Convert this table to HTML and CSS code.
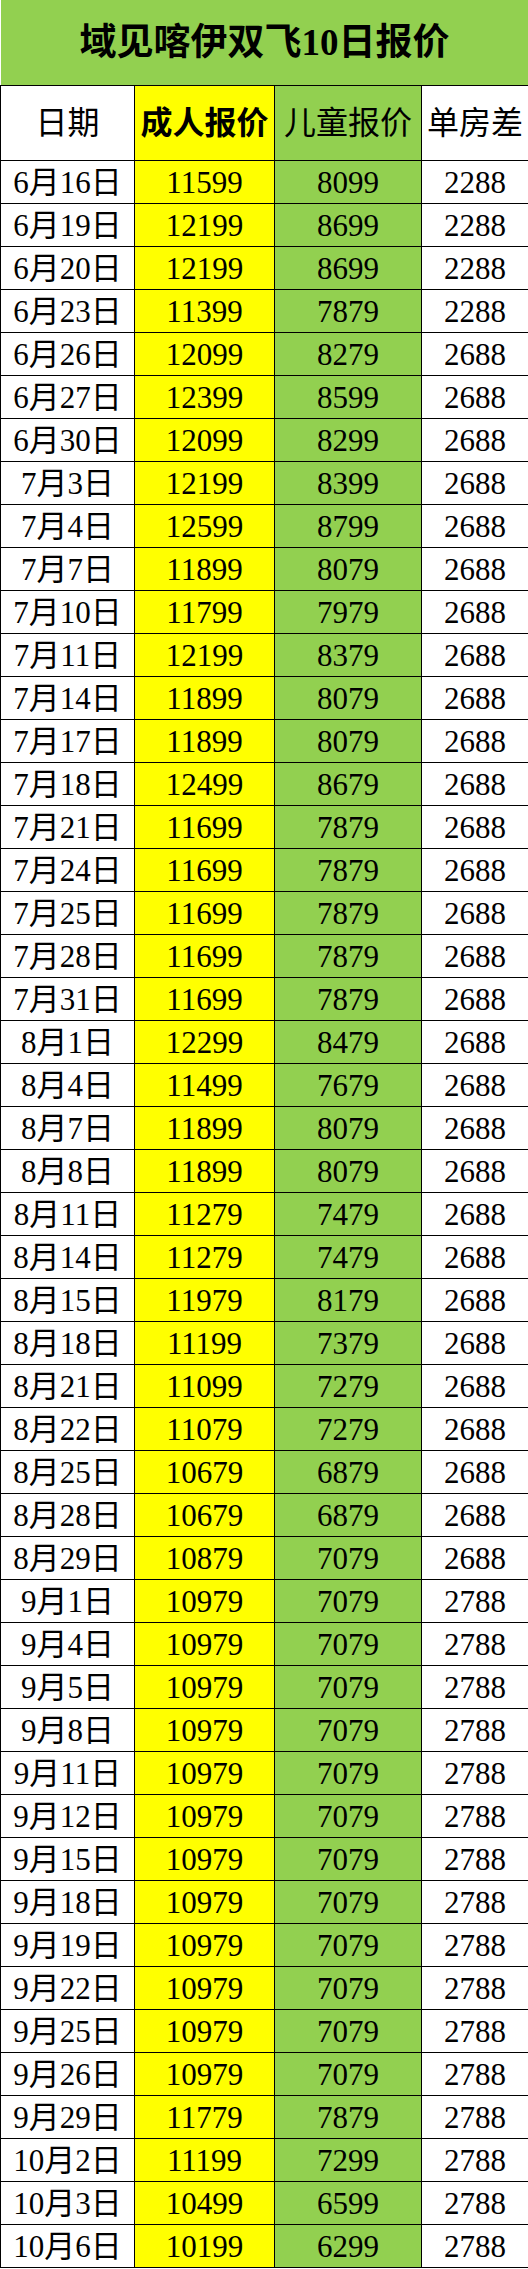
FILE: index.html
```html
<!DOCTYPE html>
<html lang="zh-CN">
<head>
<meta charset="utf-8">
<title>域见喀伊双飞10日报价</title>
<link rel="stylesheet" href="styles.css">
</head>
<body>
<table class="price">
<colgroup><col class="c-date"><col class="c-adult"><col class="c-child"><col class="c-single"></colgroup>
<tr class="title-row"><th colspan="4" class="title">域见喀伊双飞10日报价</th></tr>
<tr class="head-row"><th class="h">日期</th><th class="h adult bold">成人报价</th><th class="h child">儿童报价</th><th class="h">单房差</th></tr>
<tr><td>6月16日</td><td class="adult">11599</td><td class="child">8099</td><td>2288</td></tr>
<tr><td>6月19日</td><td class="adult">12199</td><td class="child">8699</td><td>2288</td></tr>
<tr><td>6月20日</td><td class="adult">12199</td><td class="child">8699</td><td>2288</td></tr>
<tr><td>6月23日</td><td class="adult">11399</td><td class="child">7879</td><td>2288</td></tr>
<tr><td>6月26日</td><td class="adult">12099</td><td class="child">8279</td><td>2688</td></tr>
<tr><td>6月27日</td><td class="adult">12399</td><td class="child">8599</td><td>2688</td></tr>
<tr><td>6月30日</td><td class="adult">12099</td><td class="child">8299</td><td>2688</td></tr>
<tr><td>7月3日</td><td class="adult">12199</td><td class="child">8399</td><td>2688</td></tr>
<tr><td>7月4日</td><td class="adult">12599</td><td class="child">8799</td><td>2688</td></tr>
<tr><td>7月7日</td><td class="adult">11899</td><td class="child">8079</td><td>2688</td></tr>
<tr><td>7月10日</td><td class="adult">11799</td><td class="child">7979</td><td>2688</td></tr>
<tr><td>7月11日</td><td class="adult">12199</td><td class="child">8379</td><td>2688</td></tr>
<tr><td>7月14日</td><td class="adult">11899</td><td class="child">8079</td><td>2688</td></tr>
<tr><td>7月17日</td><td class="adult">11899</td><td class="child">8079</td><td>2688</td></tr>
<tr><td>7月18日</td><td class="adult">12499</td><td class="child">8679</td><td>2688</td></tr>
<tr><td>7月21日</td><td class="adult">11699</td><td class="child">7879</td><td>2688</td></tr>
<tr><td>7月24日</td><td class="adult">11699</td><td class="child">7879</td><td>2688</td></tr>
<tr><td>7月25日</td><td class="adult">11699</td><td class="child">7879</td><td>2688</td></tr>
<tr><td>7月28日</td><td class="adult">11699</td><td class="child">7879</td><td>2688</td></tr>
<tr><td>7月31日</td><td class="adult">11699</td><td class="child">7879</td><td>2688</td></tr>
<tr><td>8月1日</td><td class="adult">12299</td><td class="child">8479</td><td>2688</td></tr>
<tr><td>8月4日</td><td class="adult">11499</td><td class="child">7679</td><td>2688</td></tr>
<tr><td>8月7日</td><td class="adult">11899</td><td class="child">8079</td><td>2688</td></tr>
<tr><td>8月8日</td><td class="adult">11899</td><td class="child">8079</td><td>2688</td></tr>
<tr><td>8月11日</td><td class="adult">11279</td><td class="child">7479</td><td>2688</td></tr>
<tr><td>8月14日</td><td class="adult">11279</td><td class="child">7479</td><td>2688</td></tr>
<tr><td>8月15日</td><td class="adult">11979</td><td class="child">8179</td><td>2688</td></tr>
<tr><td>8月18日</td><td class="adult">11199</td><td class="child">7379</td><td>2688</td></tr>
<tr><td>8月21日</td><td class="adult">11099</td><td class="child">7279</td><td>2688</td></tr>
<tr><td>8月22日</td><td class="adult">11079</td><td class="child">7279</td><td>2688</td></tr>
<tr><td>8月25日</td><td class="adult">10679</td><td class="child">6879</td><td>2688</td></tr>
<tr><td>8月28日</td><td class="adult">10679</td><td class="child">6879</td><td>2688</td></tr>
<tr><td>8月29日</td><td class="adult">10879</td><td class="child">7079</td><td>2688</td></tr>
<tr><td>9月1日</td><td class="adult">10979</td><td class="child">7079</td><td>2788</td></tr>
<tr><td>9月4日</td><td class="adult">10979</td><td class="child">7079</td><td>2788</td></tr>
<tr><td>9月5日</td><td class="adult">10979</td><td class="child">7079</td><td>2788</td></tr>
<tr><td>9月8日</td><td class="adult">10979</td><td class="child">7079</td><td>2788</td></tr>
<tr><td>9月11日</td><td class="adult">10979</td><td class="child">7079</td><td>2788</td></tr>
<tr><td>9月12日</td><td class="adult">10979</td><td class="child">7079</td><td>2788</td></tr>
<tr><td>9月15日</td><td class="adult">10979</td><td class="child">7079</td><td>2788</td></tr>
<tr><td>9月18日</td><td class="adult">10979</td><td class="child">7079</td><td>2788</td></tr>
<tr><td>9月19日</td><td class="adult">10979</td><td class="child">7079</td><td>2788</td></tr>
<tr><td>9月22日</td><td class="adult">10979</td><td class="child">7079</td><td>2788</td></tr>
<tr><td>9月25日</td><td class="adult">10979</td><td class="child">7079</td><td>2788</td></tr>
<tr><td>9月26日</td><td class="adult">10979</td><td class="child">7079</td><td>2788</td></tr>
<tr><td>9月29日</td><td class="adult">11779</td><td class="child">7879</td><td>2788</td></tr>
<tr><td>10月2日</td><td class="adult">11199</td><td class="child">7299</td><td>2788</td></tr>
<tr><td>10月3日</td><td class="adult">10499</td><td class="child">6599</td><td>2788</td></tr>
<tr><td>10月6日</td><td class="adult">10199</td><td class="child">6299</td><td>2788</td></tr>
</table>
</body>
</html>
```
FILE: styles.css
```css
html, body {
  margin: 0;
  padding: 0;
  background: #ffffff;
}
.price {
  border-collapse: collapse;
  table-layout: fixed;
  width: 528px;
  font-family: "Liberation Serif", "Noto Sans CJK SC", serif;
  color: #000;
}
.c-date { width: 134px; }
.c-adult { width: 140px; }
.c-child { width: 147px; }
.c-single { width: 107px; }
.price td, .price th {
  border: 1px solid #000;
  padding: 0;
  text-align: center;
  vertical-align: middle;
  white-space: nowrap;
  overflow: hidden;
}
.price td {
  height: 42px;
  font-size: 31px;
  line-height: 1;
  font-weight: normal;
}
.title-row .title {
  height: 85px;
  background: #92d050;
  font-size: 37px;
  font-weight: bold;
  border-top: none;
  border-left: none;
  border-right: none;
  line-height: 1;
}
.head-row .h {
  height: 74px;
  font-size: 32px;
  font-weight: normal;
  line-height: 1;
}
.head-row .bold { font-weight: bold; }
.adult { background: #ffff00; }
.child { background: #92d050; }
```
